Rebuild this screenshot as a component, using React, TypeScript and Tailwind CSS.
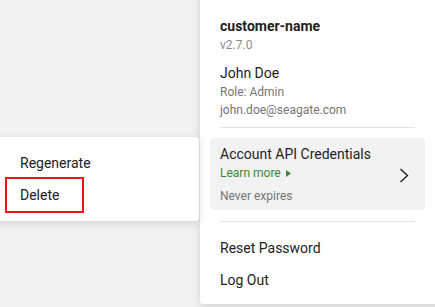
export default function App() {
  return (
    <div
      className="relative h-[307px] w-[435px] overflow-hidden bg-[#f2f2f2] text-[#222]"
      style={{ fontFamily: "Roboto, 'Liberation Sans', sans-serif" }}
    >
      {/* account menu */}
      <div className="absolute left-[200px] top-[-8px] w-[243px] h-[312px] rounded-[4px] bg-white shadow-[0_2px_8px_rgba(0,0,0,0.14)] pt-[24px] pb-[14px]">
        <div className="px-5">
          <div className="text-[14px] leading-[20px] font-bold">customer-name</div>
          <div className="text-[12px] leading-[18px] text-[#8a8a8a]">v2.7.0</div>
          <div className="mt-[9px] text-[14px] leading-[20px]">John Doe</div>
          <div className="text-[12px] leading-[18px] text-[#757575]">Role: Admin</div>
          <div className="text-[12px] leading-[18px] text-[#757575]">john.doe@seagate.com</div>
        </div>
        <div className="mx-5 mr-[28px] mt-[8px] h-px bg-[#e3e3e3]" />
        <div className="mx-[10px] mr-[18px] mt-[10px] flex items-center rounded-[4px] bg-[#f2f2f2] pl-[10px] pr-[16px] pt-[6px] pb-[5px]">
          <div className="flex-1">
            <div className="text-[14px] leading-[20px]">Account API Credentials</div>
            <div className="flex items-center gap-[5px] text-[12px] leading-[18px] text-[#3c8a2e]">
              Learn more
              <svg width="5" height="7" viewBox="0 0 5 7">
                <path d="M0 0 L5 3.5 L0 7 Z" fill="#3c8a2e" />
              </svg>
            </div>
            <div className="mt-[5px] text-[12px] leading-[18px] text-[#757575]">Never expires</div>
          </div>
          <svg width="10" height="15" viewBox="0 0 10 15" className="mt-[2px]">
            <path d="M1.5 1 L8.5 7.5 L1.5 14" fill="none" stroke="#222" strokeWidth="1.4" />
          </svg>
        </div>
        <div className="mx-5 mr-[28px] mt-[11px] h-px bg-[#e3e3e3]" />
        <div className="px-5 pt-[16px]">
          <div className="text-[14px] leading-[20px]">Reset Password</div>
          <div className="mt-[12px] text-[14px] leading-[20px]">Log Out</div>
        </div>
      </div>

      {/* context menu */}
      <div className="absolute left-[-6px] top-[137px] w-[205px] rounded-[4px] bg-white shadow-[0_2px_8px_rgba(0,0,0,0.14)] py-[10px]">
        <div className="flex h-8 items-center pl-[26px] text-[14px]">Regenerate</div>
        <div className="relative flex h-8 items-center pl-[26px] text-[14px]">
          Delete
          <div className="absolute left-[11px] top-[-2px] h-[36px] w-[79px] border-2 border-[#e8141b]" />
        </div>
      </div>
    </div>
  );
}
